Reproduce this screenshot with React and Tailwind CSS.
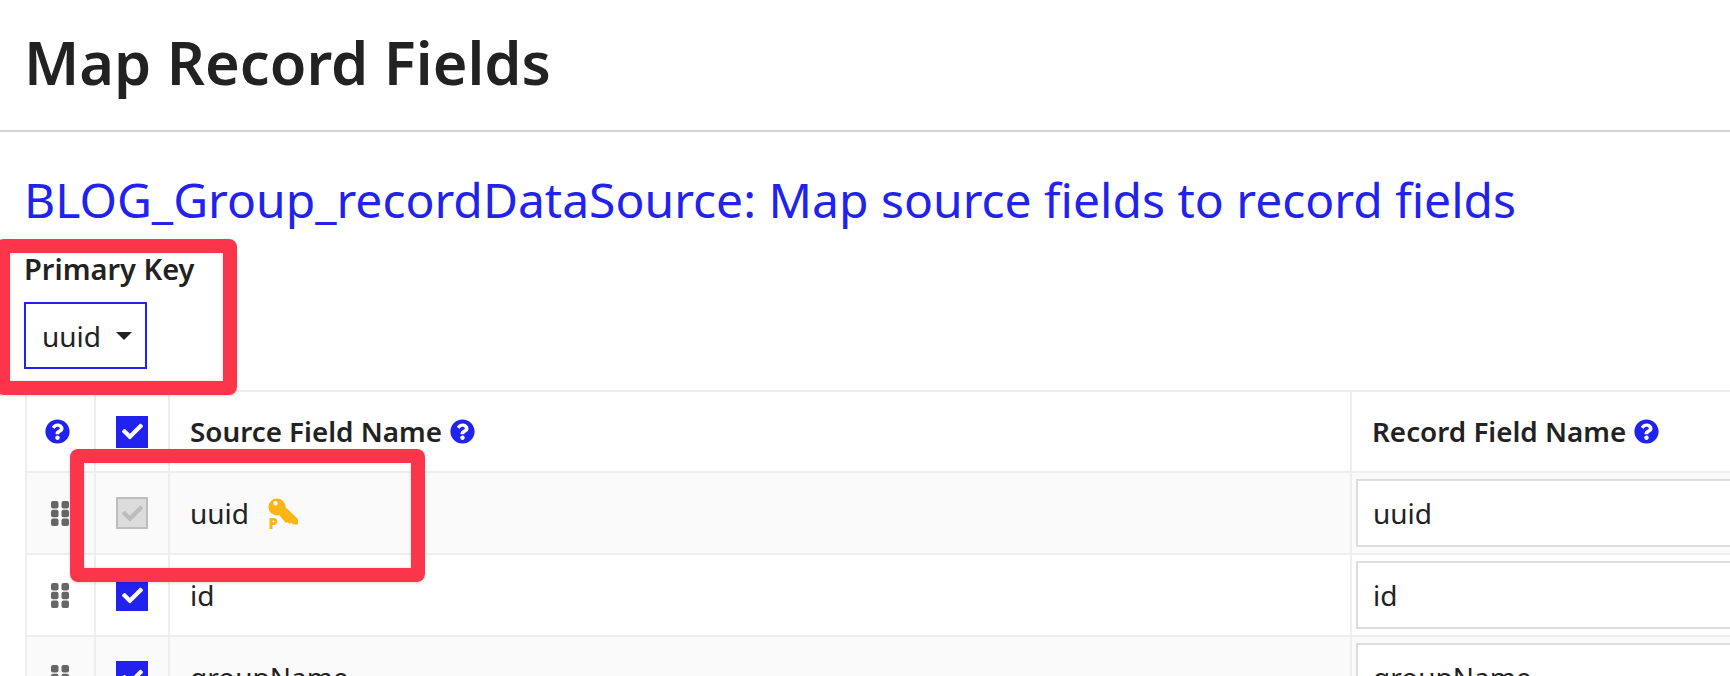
import React from 'react';
import { FaCheck, FaQuestionCircle } from 'react-icons/fa';

const rows = [
  { name: 'uuid', primary: true },
  { name: 'id' },
  { name: 'groupName' },
];

const GripIcon = () => (
  <svg width="18" height="25" viewBox="0 0 18 25" fill="#666666">
    <rect x="0" y="0" width="7.5" height="7.5" rx="2" />
    <rect x="10.5" y="0" width="7.5" height="7.5" rx="2" />
    <rect x="0" y="8.75" width="7.5" height="7.5" rx="2" />
    <rect x="10.5" y="8.75" width="7.5" height="7.5" rx="2" />
    <rect x="0" y="17.5" width="7.5" height="7.5" rx="2" />
    <rect x="10.5" y="17.5" width="7.5" height="7.5" rx="2" />
  </svg>
);

const KeyIcon = () => (
  <svg width="30" height="31" viewBox="0 0 30 31" fill="#fdb515">
    <path fillRule="evenodd" d="M9 0.500a8.500 8.500 0 1 1 0 17a8.500 8.500 0 1 1 0-17zM7.500 3a2.200 2.200 0 1 0 0 4.400a2.200 2.200 0 1 0 0-4.400z" />
    <path d="M14 6L30 21V26.500H25L23 24.500L21.500 26L19.500 24L18 25L11 17Z" />
    <text x="0.500" y="31" fontSize="15" fontWeight="900" fontFamily="'Noto Sans', sans-serif">P</text>
  </svg>
);

const Checkbox = ({ disabled }) =>
  disabled ? (
    <span className="w-8 h-8 flex items-center justify-center bg-[#dcdcdc] border-2 border-[#bdbdbd]">
      <FaCheck className="w-[21px] h-[21px] text-[#bdbdbd]" />
    </span>
  ) : (
    <span className="w-8 h-8 flex items-center justify-center bg-[#2222ee]">
      <FaCheck className="w-[21px] h-[21px] text-white" />
    </span>
  );

const App = () => {
  return (
    <div className="relative w-[1730px] h-[676px] overflow-hidden bg-white text-[#222222]" style={{ fontFamily: "'Noto Sans', sans-serif" }}>
      <div className="h-[132px] pl-[24px] pb-[6px] border-b-2 border-[#d4d4d4] flex items-center">
        <h1 className="text-[59.5px] leading-none font-semibold">Map Record Fields</h1>
      </div>

      <div className="pl-[24px]">
        <h2 className="mt-[42px] h-[52px] text-[48px] leading-[52px] text-[#2222ee] whitespace-nowrap">
          BLOG_Group_recordDataSource: Map source fields to record fields
        </h2>
        <div className="mt-[25px] h-[36px] text-[29px] leading-[36px] font-semibold">Primary Key</div>
        <div className="mt-[15px] w-[123px] h-[67px] border-2 border-[#2222ee] flex items-center pl-[16px] gap-[15px] text-[28px]">
          <span>uuid</span>
          <span className="w-0 h-0 border-x-[8px] border-x-transparent border-t-[8px] border-t-[#222222]" />
        </div>

        <div className="mt-[21px] ml-[1px] w-[1800px] border-t-2 border-l-2 border-[#eeeeee]">
          <div className="flex h-[81px] border-b-2 border-[#eeeeee] text-[27.8px] font-semibold">
            <div className="w-[69px] flex items-center justify-center border-r-2 border-[#eeeeee]">
              <FaQuestionCircle className="w-[25px] h-[25px] text-[#2222ee] ml-[-6px]" />
            </div>
            <div className="w-[74px] flex items-center justify-center border-r-2 border-[#eeeeee]">
              <Checkbox />
            </div>
            <div className="w-[1182px] flex items-center gap-[8px] pl-[20px] border-r-2 border-[#eeeeee]">
              Source Field Name
              <FaQuestionCircle className="w-[25px] h-[25px] text-[#2222ee]" />
            </div>
            <div className="flex-1 flex items-center gap-[8px] pl-[20px]">
              Record Field Name
              <FaQuestionCircle className="w-[25px] h-[25px] text-[#2222ee]" />
            </div>
          </div>
          {rows.map((row, i) => (
            <div key={row.name} className={`flex h-[82px] border-b-2 border-[#eeeeee] text-[28px] ${i % 2 === 0 ? 'bg-[#fafafa]' : 'bg-white'}`}>
              <div className="w-[69px] flex items-center justify-center border-r-2 border-[#eeeeee]">
                <span className="flex ml-[-2px]"><GripIcon /></span>
              </div>
              <div className="w-[74px] flex items-center justify-center border-r-2 border-[#eeeeee]">
                <Checkbox disabled={row.primary} />
              </div>
              <div className="w-[1182px] flex items-center gap-[19px] pl-[20px] border-r-2 border-[#eeeeee]">
                {row.name}
                {row.primary && <KeyIcon />}
              </div>
              <div className="flex-1 flex items-center pl-[4px]">
                <div className="w-full h-[68px] bg-white border-2 border-[#dddddd] flex items-center pl-[15px]">{row.name}</div>
              </div>
            </div>
          ))}
        </div>
      </div>

      {/* annotation boxes */}
      <div className="absolute left-[-4px] top-[239px] w-[241px] h-[156px] border-[14px] border-[#fc364a] rounded-[8px] shadow-[0_1px_3px_rgba(0,0,0,0.15),inset_0_0_3px_rgba(0,0,0,0.15)]" />
      <div className="absolute left-[70px] top-[449px] w-[355px] h-[133px] border-[14px] border-[#fc364a] rounded-[8px] shadow-[0_1px_3px_rgba(0,0,0,0.15),inset_0_0_3px_rgba(0,0,0,0.15)]" />
    </div>
  );
};

export default App;
